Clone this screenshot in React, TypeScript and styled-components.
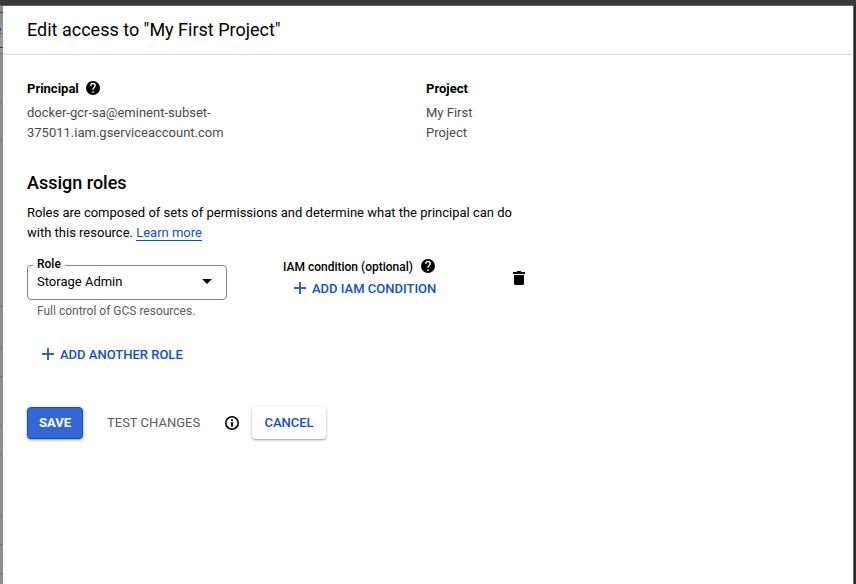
import React from "react";
import styled, { createGlobalStyle } from "styled-components";

const Global = createGlobalStyle`
  *, *::before, *::after { box-sizing: border-box; }
  body { margin: 0; background: #3a3a3a; font-family: Roboto, "Liberation Sans", sans-serif; color: #000; }
  button { font-family: inherit; }
  h1, h2, p { margin: 0; }
`;

const Screen = styled.div`
  width: 856px;
  height: 584px;
  overflow: hidden;
  display: grid;
  grid-template-columns: 3px 850px 1px 2px;
  grid-template-rows: 5px 579px;
  background: #2b2b2b;
`;

const TopBar = styled.div`
  grid-column: 1 / -1;
  background: #3a3a3a;
`;

const Backdrop = styled.div`
  position: relative;
  background: linear-gradient(#8a8c8e 0, #999b9d 42px, #8f8f8f 49px, #8f8f8f 100%);
  border-top: 1px solid #636363;
`;

const Rule = styled.i<{ $y: number; $color?: string }>`
  position: absolute;
  left: 0;
  width: 3px;
  height: 1px;
  top: ${(p) => p.$y - 6}px;
  background: ${(p) => p.$color ?? "#747474"};
`;

const LinkSliver = styled.i<{ $y: number; $h: number }>`
  position: absolute;
  left: 0;
  width: 1px;
  top: ${(p) => p.$y - 6}px;
  height: ${(p) => p.$h}px;
  background: #1d5c96;
`;

const Edge = styled.div`
  background: #6a6a6a;
`;

const Panel = styled.main`
  background: #fff;
  border-top: 1px solid #636363;
`;

const Header = styled.header`
  height: 49px;
  padding: 0 24px;
  border-bottom: 1px solid #dadada;
`;

const Title = styled.h1`
  font-size: 18px;
  font-weight: 400;
  line-height: 48px;
  white-space: nowrap;
`;

const Content = styled.div`
  padding: 23px 24px 0;
`;

const Summary = styled.section`
  display: grid;
  grid-template-columns: 399px 70px;
`;

const Label = styled.div<{ $small?: boolean }>`
  display: flex;
  align-items: center;
  gap: ${(p) => (p.$small ? "7px" : "6px")};
  height: ${(p) => (p.$small ? "16px" : "20px")};
  font-size: ${(p) => (p.$small ? "12px" : "13px")};
  font-weight: ${(p) => (p.$small ? 500 : 700)};
  white-space: nowrap;
`;

const LabelText = styled.span`
  padding-top: 2px;
`;

const Value = styled.p`
  margin-top: 5px;
  font-size: 13px;
  line-height: 20px;
  color: #4a4a4a;
`;

const SectionTitle = styled.h2`
  margin-top: 28px;
  font-size: 18px;
  line-height: 24px;
  font-weight: 500;
`;

const Description = styled.p`
  margin-top: 8px;
  font-size: 13px;
  line-height: 20px;
  white-space: nowrap;
`;

const Link = styled.a`
  color: #0b4fdb;
  border-bottom: 1px solid #0b4fdb;
`;

const RoleRow = styled.section`
  display: grid;
  grid-template-columns: 256px 228px 16px;
  margin-top: 14px;
`;

const Field = styled.fieldset`
  width: 200px;
  height: 43px;
  margin: 0;
  padding: 0 14px 0 9px;
  border: 1px solid #80868b;
  border-radius: 4px;
`;

const Legend = styled.legend`
  margin-left: -4px;
  padding: 0 4px;
  height: 16px;
  font-size: 12px;
  line-height: 14px;
  font-weight: 500;
`;

const Selected = styled.div`
  display: flex;
  justify-content: space-between;
  align-items: center;
  height: 16px;
  font-size: 13px;
`;

const Hint = styled.p`
  padding-left: 10px;
  margin-top: 3px;
  font-size: 12px;
  line-height: 16px;
  color: #5c5c5c;
`;

const Condition = styled.div`
  padding-top: 1px;
`;

const AddButton = styled.button<{ $top: number; $left: number }>`
  display: flex;
  align-items: center;
  gap: 6px;
  height: 20px;
  margin: ${(p) => p.$top}px 0 0 ${(p) => p.$left}px;
  padding: 0;
  border: 0;
  background: none;
  color: #0b4fdb;
  font-size: 13px;
  font-weight: 500;
  white-space: nowrap;
`;

const DeleteButton = styled.button`
  display: block;
  width: 16px;
  height: 16px;
  margin-top: 13px;
  padding: 0;
  border: 0;
  background: none;
`;

const Actions = styled.footer`
  display: flex;
  align-items: center;
  margin-top: 43px;
`;

const Button = styled.button<{ $kind: "primary" | "raised" | "text" }>`
  height: 32px;
  width: ${(p) => ({ primary: 56, raised: 74, text: 94 })[p.$kind]}px;
  padding: 0 0 2px;
  border: ${(p) => (p.$kind === "primary" ? "1px solid #1150d4" : "0")};
  border-radius: 4px;
  background: ${(p) => ({ primary: "#3367d6", raised: "#fff", text: "none" })[p.$kind]};
  color: ${(p) => ({ primary: "#fff", raised: "#0b4fdb", text: "#5c5c5c" })[p.$kind]};
  box-shadow: ${(p) => (p.$kind === "text" ? "none" : "0 1px 3px rgba(0,0,0,.3), 0 1px 1px rgba(0,0,0,.14)")};
  font-size: 13px;
  font-weight: ${(p) => ({ primary: 700, raised: 500, text: 400 })[p.$kind]};
  text-align: ${(p) => (p.$kind === "text" ? "left" : "center")};
  white-space: nowrap;
`;

const TestGroup = styled.div`
  display: flex;
  align-items: center;
  gap: 23px;
  margin: 0 12px 0 24px;
`;

const Glyph = styled.svg`
  display: block;
  flex: none;
`;

const HelpIcon = () => (
  <Glyph width="16" height="16" viewBox="0 0 24 24">
    <path d="M12 1.5A10.5 10.5 0 1 0 12 22.500 10.500 10.500 0 0 0 12 1.500zm1.100 17.500h-2.200v-2.200h2.200zm2.200-8.200-.9.950c-.8.800-1.300 1.450-1.300 3.050h-2.200v-.5c0-1.200.5-2.250 1.300-3.050l1.300-1.300c.4-.35.600-.85.600-1.450a2.100 2.100 0 0 0-4.200 0H7.700a4.300 4.300 0 0 1 8.600 0c0 .9-.4 1.700-1 2.300z" />
  </Glyph>
);

const PlusIcon = () => (
  <Glyph width="12" height="12" viewBox="0 0 12 12">
    <path d="M5 0h2v5h5v2H7v5H5V7H0V5h5z" fill="#2c62d6" />
  </Glyph>
);

const TrashIcon = () => (
  <Glyph width="16" height="16" viewBox="0 0 16 16">
    <path d="M2 2h3.500l1-1h3l1 1H14v2H2zM3 5h10v8.500a1.500 1.500 0 0 1-1.500 1.500h-7A1.500 1.500 0 0 1 3 13.500z" />
  </Glyph>
);

const CaretIcon = () => (
  <Glyph width="10" height="5" viewBox="0 0 10 5">
    <path d="M0 0h10L5 5z" />
  </Glyph>
);

const InfoIcon = () => (
  <Glyph width="16" height="16" viewBox="0 0 16 16">
    <circle cx="8" cy="8" r="6.200" fill="none" stroke="#000" strokeWidth="1.600" />
    <path d="M7.100 4.200h1.800v1.800H7.100zM7.100 7h1.800v4.800H7.100z" />
  </Glyph>
);

const dividers = [53, 102, 139, 306, 347, 376, 425, 454, 515, 544, 573];

export default function App() {
  return (
    <>
      <Global />
      <Screen>
        <TopBar />
        <Backdrop>
          <Rule $y={12} $color="#343c44" />
          <LinkSliver $y={28} $h={3} />
          <LinkSliver $y={33} $h={1} />
          <Rule $y={47} $color="#343c44" />
          {dividers.map((y) => (
            <Rule key={y} $y={y} />
          ))}
        </Backdrop>
        <Panel>
          <Header>
            <Title>Edit access to "My First Project"</Title>
          </Header>
          <Content>
            <Summary>
              <div>
                <Label>Principal <HelpIcon /></Label>
                <Value>docker-gcr-sa@eminent-subset-<br />375011.iam.gserviceaccount.com</Value>
              </div>
              <div>
                <Label>Project</Label>
                <Value>My First<br />Project</Value>
              </div>
            </Summary>
            <SectionTitle>Assign roles</SectionTitle>
            <Description>
              Roles are composed of sets of permissions and determine what the principal can do<br />
              with this resource. <Link>Learn more</Link>
            </Description>
            <RoleRow>
              <div>
                <Field>
                  <Legend>Role</Legend>
                  <Selected>Storage Admin <CaretIcon /></Selected>
                </Field>
                <Hint>Full control of GCS resources.</Hint>
              </div>
              <Condition>
                <Label $small><LabelText>IAM condition (optional)</LabelText> <HelpIcon /></Label>
                <AddButton $top={4} $left={11}><PlusIcon />ADD IAM CONDITION</AddButton>
              </Condition>
              <DeleteButton aria-label="Delete role"><TrashIcon /></DeleteButton>
            </RoleRow>
            <AddButton $top={25} $left={15}><PlusIcon />ADD ANOTHER ROLE</AddButton>
            <Actions>
              <Button $kind="primary">SAVE</Button>
              <TestGroup>
                <Button $kind="text">TEST CHANGES</Button>
                <InfoIcon />
              </TestGroup>
              <Button $kind="raised">CANCEL</Button>
            </Actions>
          </Content>
        </Panel>
        <Edge />
      </Screen>
    </>
  );
}
